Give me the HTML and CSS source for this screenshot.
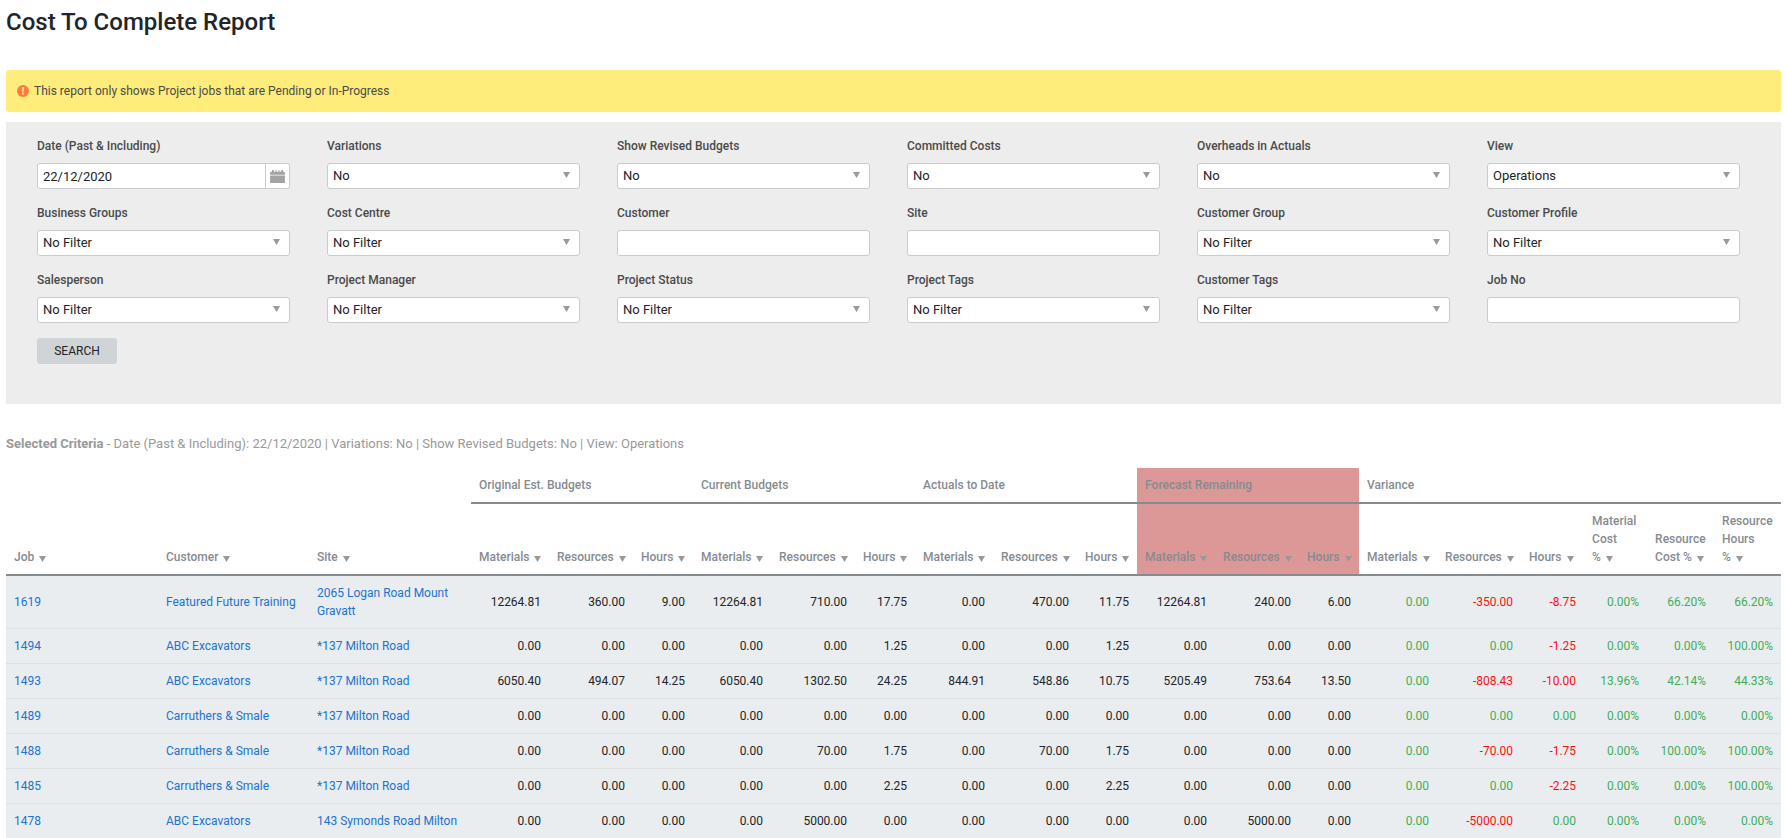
FILE: index.html
```html
<!doctype html>
<html lang="en">
  <head>
    <meta charset="UTF-8" />
    <meta name="viewport" content="width=device-width, initial-scale=1.0" />
    <title>Cost To Complete Report</title>
    <link rel="stylesheet" href="styles.css">
  </head>
  <body>
    <h1>Cost To Complete Report</h1>

    <div class="alert" role="status">
      <svg class="alert-icon" viewBox="0 0 12 12" aria-hidden="true">
        <circle cx="6" cy="6" r="6" fill="#ff7a45" />
        <path d="M4.9 2.2h2.2l-.3 4.6H5.2zM5 7.8h2v1.8H5z" fill="#feec7b" />
      </svg>
      <span>This report only shows Project jobs that are Pending or In-Progress</span>
    </div>

    <form class="filters">
      <div class="filter-grid">
        <div class="field">
          <label for="date">Date (Past &amp; Including)</label>
          <div class="date-box">
            <input type="text" id="date" value="22/12/2020" />
            <button type="button" class="date-button" aria-label="Pick a date">
              <svg viewBox="0 0 16 14" aria-hidden="true">
                <path d="M1 2h1V0h2v2h2V0h1v2h2V0h1v2h2V0h2v2h1l1 1v2H0V3zM0 6h16v8H0z" fill="#a3a3a3" />
              </svg>
            </button>
          </div>
        </div>
        <div class="field">
          <label for="variations">Variations</label>
          <select id="variations"><option>No</option><option>Yes</option></select>
        </div>
        <div class="field">
          <label for="revised">Show Revised Budgets</label>
          <select id="revised"><option>No</option><option>Yes</option></select>
        </div>
        <div class="field">
          <label for="committed">Committed Costs</label>
          <select id="committed"><option>No</option><option>Yes</option></select>
        </div>
        <div class="field">
          <label for="overheads">Overheads in Actuals</label>
          <select id="overheads"><option>No</option><option>Yes</option></select>
        </div>
        <div class="field">
          <label for="view">View</label>
          <select id="view"><option>Operations</option></select>
        </div>

        <div class="field">
          <label for="groups">Business Groups</label>
          <select id="groups"><option>No Filter</option></select>
        </div>
        <div class="field">
          <label for="centre">Cost Centre</label>
          <select id="centre"><option>No Filter</option></select>
        </div>
        <div class="field">
          <label for="customer">Customer</label>
          <input type="text" id="customer" />
        </div>
        <div class="field">
          <label for="site">Site</label>
          <input type="text" id="site" />
        </div>
        <div class="field">
          <label for="customer-group">Customer Group</label>
          <select id="customer-group"><option>No Filter</option></select>
        </div>
        <div class="field">
          <label for="customer-profile">Customer Profile</label>
          <select id="customer-profile"><option>No Filter</option></select>
        </div>

        <div class="field">
          <label for="salesperson">Salesperson</label>
          <select id="salesperson"><option>No Filter</option></select>
        </div>
        <div class="field">
          <label for="manager">Project Manager</label>
          <select id="manager"><option>No Filter</option></select>
        </div>
        <div class="field">
          <label for="status">Project Status</label>
          <select id="status"><option>No Filter</option></select>
        </div>
        <div class="field">
          <label for="project-tags">Project Tags</label>
          <select id="project-tags"><option>No Filter</option></select>
        </div>
        <div class="field">
          <label for="customer-tags">Customer Tags</label>
          <select id="customer-tags"><option>No Filter</option></select>
        </div>
        <div class="field">
          <label for="job-no">Job No</label>
          <input type="text" id="job-no" />
        </div>
      </div>
      <button type="button" class="search">SEARCH</button>
    </form>

    <p class="criteria"><strong>Selected Criteria</strong> - Date (Past &amp; Including): 22/12/2020 | Variations: No | Show Revised Budgets: No | View: Operations</p>

    <table class="report">
      <colgroup>
        <col class="w-job" /><col class="w-customer" /><col class="w-site" />
        <col class="w-materials" /><col class="w-resources" /><col class="w-hours" />
        <col class="w-materials" /><col class="w-resources" /><col class="w-hours" />
        <col class="w-materials" /><col class="w-resources" /><col class="w-hours" />
        <col class="w-materials" /><col class="w-resources" /><col class="w-hours" />
        <col class="w-materials" /><col class="w-resources" /><col class="w-variance" />
        <col class="w-variance" /><col class="w-percent" /><col class="w-percent" />
      </colgroup>
      <thead>
        <tr class="group-row">
          <td colspan="3"></td>
          <th colspan="3">Original Est. Budgets</th>
          <th colspan="3">Current Budgets</th>
          <th colspan="3">Actuals to Date</th>
          <th colspan="3" class="forecast">Forecast Remaining</th>
          <th colspan="6">Variance</th>
        </tr>
        <tr>
          <th><a href="#">Job</a></th>
          <th><a href="#">Customer</a></th>
          <th><a href="#">Site</a></th>
          <th><a href="#">Materials</a></th>
          <th><a href="#">Resources</a></th>
          <th><a href="#">Hours</a></th>
          <th><a href="#">Materials</a></th>
          <th><a href="#">Resources</a></th>
          <th><a href="#">Hours</a></th>
          <th><a href="#">Materials</a></th>
          <th><a href="#">Resources</a></th>
          <th><a href="#">Hours</a></th>
          <th class="forecast"><a href="#">Materials</a></th>
          <th class="forecast"><a href="#">Resources</a></th>
          <th class="forecast"><a href="#">Hours</a></th>
          <th><a href="#">Materials</a></th>
          <th><a href="#">Resources</a></th>
          <th><a href="#">Hours</a></th>
          <th><a href="#">Material Cost %</a></th>
          <th><a href="#">Resource Cost %</a></th>
          <th><a href="#">Resource Hours %</a></th>
        </tr>
      </thead>
      <tbody>
        <tr>
          <td><a href="#">1619</a></td><td><a href="#">Featured Future Training</a></td><td><a href="#">2065 Logan Road Mount Gravatt</a></td>
          <td>12264.81</td><td>360.00</td><td>9.00</td>
          <td>12264.81</td><td>710.00</td><td>17.75</td>
          <td>0.00</td><td>470.00</td><td>11.75</td>
          <td>12264.81</td><td>240.00</td><td>6.00</td>
          <td>0.00</td><td class="neg">-350.00</td><td class="neg">-8.75</td><td>0.00%</td><td>66.20%</td><td>66.20%</td>
        </tr>
        <tr>
          <td><a href="#">1494</a></td><td><a href="#">ABC Excavators</a></td><td><a href="#">*137 Milton Road</a></td>
          <td>0.00</td><td>0.00</td><td>0.00</td>
          <td>0.00</td><td>0.00</td><td>1.25</td>
          <td>0.00</td><td>0.00</td><td>1.25</td>
          <td>0.00</td><td>0.00</td><td>0.00</td>
          <td>0.00</td><td>0.00</td><td class="neg">-1.25</td><td>0.00%</td><td>0.00%</td><td>100.00%</td>
        </tr>
        <tr>
          <td><a href="#">1493</a></td><td><a href="#">ABC Excavators</a></td><td><a href="#">*137 Milton Road</a></td>
          <td>6050.40</td><td>494.07</td><td>14.25</td>
          <td>6050.40</td><td>1302.50</td><td>24.25</td>
          <td>844.91</td><td>548.86</td><td>10.75</td>
          <td>5205.49</td><td>753.64</td><td>13.50</td>
          <td>0.00</td><td class="neg">-808.43</td><td class="neg">-10.00</td><td>13.96%</td><td>42.14%</td><td>44.33%</td>
        </tr>
        <tr>
          <td><a href="#">1489</a></td><td><a href="#">Carruthers &amp; Smale</a></td><td><a href="#">*137 Milton Road</a></td>
          <td>0.00</td><td>0.00</td><td>0.00</td>
          <td>0.00</td><td>0.00</td><td>0.00</td>
          <td>0.00</td><td>0.00</td><td>0.00</td>
          <td>0.00</td><td>0.00</td><td>0.00</td>
          <td>0.00</td><td>0.00</td><td>0.00</td><td>0.00%</td><td>0.00%</td><td>0.00%</td>
        </tr>
        <tr>
          <td><a href="#">1488</a></td><td><a href="#">Carruthers &amp; Smale</a></td><td><a href="#">*137 Milton Road</a></td>
          <td>0.00</td><td>0.00</td><td>0.00</td>
          <td>0.00</td><td>70.00</td><td>1.75</td>
          <td>0.00</td><td>70.00</td><td>1.75</td>
          <td>0.00</td><td>0.00</td><td>0.00</td>
          <td>0.00</td><td class="neg">-70.00</td><td class="neg">-1.75</td><td>0.00%</td><td>100.00%</td><td>100.00%</td>
        </tr>
        <tr>
          <td><a href="#">1485</a></td><td><a href="#">Carruthers &amp; Smale</a></td><td><a href="#">*137 Milton Road</a></td>
          <td>0.00</td><td>0.00</td><td>0.00</td>
          <td>0.00</td><td>0.00</td><td>2.25</td>
          <td>0.00</td><td>0.00</td><td>2.25</td>
          <td>0.00</td><td>0.00</td><td>0.00</td>
          <td>0.00</td><td>0.00</td><td class="neg">-2.25</td><td>0.00%</td><td>0.00%</td><td>100.00%</td>
        </tr>
        <tr>
          <td><a href="#">1478</a></td><td><a href="#">ABC Excavators</a></td><td><a href="#">143 Symonds Road Milton</a></td>
          <td>0.00</td><td>0.00</td><td>0.00</td>
          <td>0.00</td><td>5000.00</td><td>0.00</td>
          <td>0.00</td><td>0.00</td><td>0.00</td>
          <td>0.00</td><td>5000.00</td><td>0.00</td>
          <td>0.00</td><td class="neg">-5000.00</td><td>0.00</td><td>0.00%</td><td>0.00%</td><td>0.00%</td>
        </tr>
      </tbody>
    </table>
  </body>
</html>
```
FILE: styles.css
```css
:root {
  --text: #212529;
  --label: #4a4a4a;
  --muted: #999;
  --heading: #868b90;
  --link: #2273cf;
  --good: #3fae59;
  --bad: #ff0f0f;
  --border: #c9cbcd;
  --arrow: url("data:image/svg+xml,%3Csvg xmlns='http://www.w3.org/2000/svg' viewBox='0 0 7 6'%3E%3Cpath d='M0 0h7L3.5 6z' fill='%23999'/%3E%3C/svg%3E");
}

* {
  box-sizing: border-box;
}

body {
  margin: 6px 6px 0;
  background: #fff;
  color: var(--text);
  font-family: Roboto, 'Liberation Sans', sans-serif;
  font-size: 12px;
  line-height: 18px;
}

h1 {
  margin: 0 0 32px;
  font-size: 24px;
  font-weight: 500;
  line-height: 32px;
}

a {
  color: var(--link);
  text-decoration: none;
}

.alert {
  display: flex;
  align-items: center;
  gap: 5px;
  margin-bottom: 10px;
  padding: 12px 11px;
  border-radius: 3px;
  background: #feec7b;
  color: var(--label);
}

.alert-icon {
  width: 12px;
  height: 12px;
}

/* Filters */
.filters {
  padding: 15px 41px 40px 31px;
  background: #ededed;
}

.filter-grid {
  display: grid;
  grid-template-columns: repeat(6, 1fr);
  gap: 15px 37px;
  margin-bottom: 15px;
}

.field {
  display: flex;
  flex-direction: column;
  gap: 8px;
}

label {
  color: var(--label);
  font-weight: 500;
}

input,
select {
  width: 100%;
  height: 26px;
  padding: 0 5px;
  border: 1px solid var(--border);
  border-radius: 3px;
  background: #fff;
  color: var(--text);
  font-family: inherit;
  font-size: 13px;
}

select {
  appearance: none;
  padding-bottom: 2px;
  background: #fff var(--arrow) no-repeat right 9px top 8px / 7px 6px;
}

.date-box {
  display: flex;
}

.date-box input {
  flex: 1;
  min-width: 0;
  border-radius: 3px 0 0 3px;
}

.date-button {
  display: flex;
  align-items: center;
  justify-content: center;
  width: 24px;
  padding: 0;
  border: 1px solid var(--border);
  border-left: 0;
  border-radius: 0 3px 3px 0;
  background: #fff;
}

.date-button svg {
  width: 15px;
  height: 13px;
}

.search {
  width: 80px;
  height: 26px;
  padding: 0;
  border: 0;
  border-radius: 3px;
  background: #d0d4d7;
  color: var(--text);
  font-family: inherit;
  font-size: 12px;
}

.criteria {
  margin: 31px 0 15px;
  color: var(--muted);
  font-size: 13px;
}

/* Report table */
.report {
  width: 100%;
  border-collapse: separate;
  border-spacing: 0;
  table-layout: fixed;
}

.w-job { width: 152px; }
.w-customer { width: 151px; }
.w-site { width: 162px; }
.w-materials { width: 78px; }
.w-resources { width: 84px; }
.w-hours { width: 60px; }
.w-variance { width: 63px; }
.w-percent { width: 67px; }

th,
td {
  padding: 8px;
}

th {
  border-bottom: 2px solid var(--heading);
  color: var(--heading);
  font-weight: 500;
  text-align: left;
  vertical-align: bottom;
}

th a {
  padding-right: 12px;
  background: var(--arrow) no-repeat right 6px / 7px 6px;
  color: inherit;
}

.forecast {
  background: #dc9896;
}

tbody td {
  border-bottom: 1px solid #dfe0e2;
  background: #e9edf0;
  text-align: right;
}

tbody td:nth-child(-n + 3) {
  text-align: left;
}

/* Variance columns */
tbody td:nth-child(n + 16) {
  color: var(--good);
}

tbody td.neg {
  color: var(--bad);
}
```
